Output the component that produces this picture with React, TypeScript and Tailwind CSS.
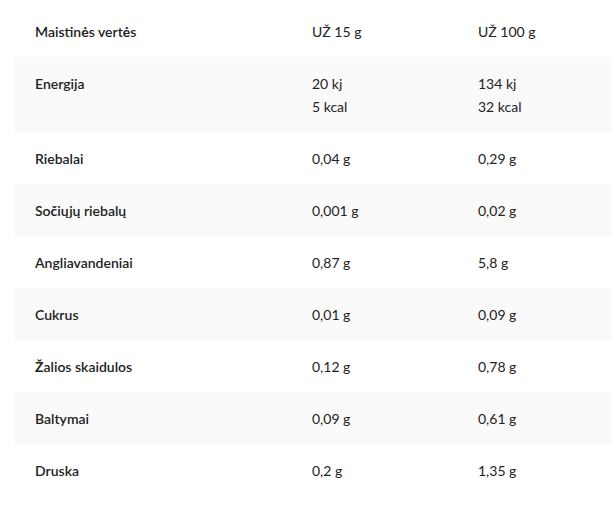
import React from "react";

type Row = { label: React.ReactNode; a: string[]; b: string[] };

const B = ({ c }: { c: string }) => <span className="font-bold">{c}</span>;

const rows: Row[] = [
  { label: <>Energija</>, a: ["20 kj", "5 kcal"], b: ["134 kj", "32 kcal"] },
  { label: <>Riebalai</>, a: ["0,04 g"], b: ["0,29 g"] },
  { label: <>So<B c="č" />iųjų riebalų</>, a: ["0,001 g"], b: ["0,02 g"] },
  { label: <>Angliavandeniai</>, a: ["0,87 g"], b: ["5,8 g"] },
  { label: <>Cukrus</>, a: ["0,01 g"], b: ["0,09 g"] },
  { label: <><B c="Ž" />alios skaidulos</>, a: ["0,12 g"], b: ["0,78 g"] },
  { label: <>Baltymai</>, a: ["0,09 g"], b: ["0,61 g"] },
  { label: <>Druska</>, a: ["0,2 g"], b: ["1,35 g"] },
];

export default function App() {
  return (
    <div
      className="w-[612px] h-[506px] bg-white pt-[5px] pl-[14px] text-[14px] leading-[23px] text-[#222222] overflow-hidden"
      style={{ fontFamily: "Lato, 'Noto Sans', sans-serif" }}
    >
      <div className="grid grid-cols-[298px_166px_1fr] py-[14.5px]">
        <div className="pl-[21px] font-semibold">
          Maistin<B c="ė" />s vert<B c="ė" />s
        </div>
        <div>UŽ 15 g</div>
        <div>UŽ 100 g</div>
      </div>
      {rows.map((r, i) => (
        <div
          key={i}
          className={
            "grid grid-cols-[298px_166px_1fr] py-[14.5px] " +
            (i % 2 === 0 ? "bg-[#fafafa]" : "bg-white")
          }
        >
          <div className="pl-[21px] font-semibold">{r.label}</div>
          <div className="flex flex-col">
            {r.a.map((t) => (
              <span key={t}>{t}</span>
            ))}
          </div>
          <div className="flex flex-col">
            {r.b.map((t) => (
              <span key={t}>{t}</span>
            ))}
          </div>
        </div>
      ))}
    </div>
  );
}
